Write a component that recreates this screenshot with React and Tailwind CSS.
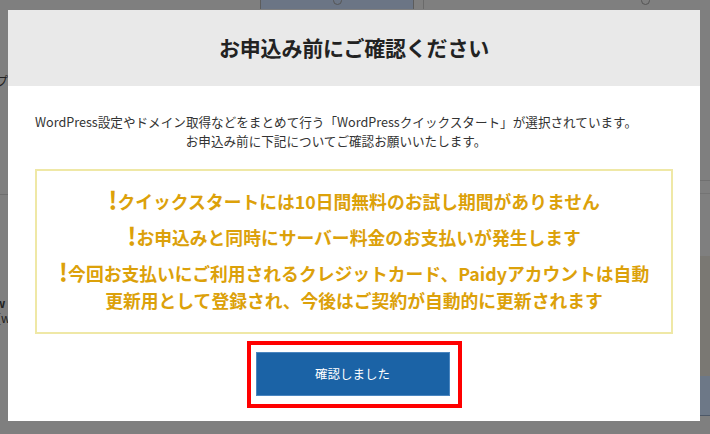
import React from 'react'

const NOTICES = [
  ['クイックスタートには10日間無料のお試し期間がありません'],
  ['お申込みと同時にサーバー料金のお支払いが発生します'],
  ['今回お支払いにご利用されるクレジットカード、Paidyアカウントは自動', '更新用として登録され、今後はご契約が自動的に更新されます']
]

function Backdrop() {
  // dimmed page that sits behind the dialog
  return (
    <div className="flex flex-col h-full">
      <div className="flex h-[9px]">
        <div className="w-[260px]" />
        <div className="w-[154px] bg-[#6b7585] border-x border-[#5c5c5c] flex justify-center">
          <div className="w-[9px] h-[9px] -mt-[4px] rounded-full border border-[#555]" />
        </div>
        <div className="w-[10px] border-r border-[#6a6a6a]" />
        <div className="flex-1 flex justify-end pr-[60px]">
          <div className="w-[9px] h-[9px] -mt-[4px] rounded-full border border-[#555]" />
        </div>
      </div>
      <div className="flex-1 flex justify-between">
        <div className="w-[8px] flex flex-col text-[#222] text-[12px] overflow-hidden">
          <div className="h-[64px]" />
          <div className="leading-[16px] -ml-[4px]">プ</div>
          <div className="h-[106px] border-b border-[#6e6e6e]" />
          <div className="h-[100px]" />
          <div className="leading-[15px] font-bold -ml-[5px]">w</div>
          <div className="leading-[15px] -ml-[3px]">[w</div>
        </div>
        <div className="w-[10px] flex flex-col">
          <div className="h-[172px] border-b border-[#707070]" />
          <div className="h-[13px] border-b border-[#747474]" />
          <div className="h-[62px]" />
          <div className="h-[120px] bg-[#7a7873]" />
          <div className="h-[40px] bg-[#6d7887] border-b border-[#4d5868]" />
        </div>
      </div>
    </div>
  )
}

export default function App() {
  return (
    <div className="relative w-[710px] h-[434px] bg-[#7f7f7f] overflow-hidden font-['Noto_Sans_CJK_JP',sans-serif]">
      <Backdrop />

      {/* dialog */}
      <div className="absolute left-[8px] top-[10px] w-[692px] h-[411px] bg-white flex flex-col">
        <div className="h-[76px] bg-[#e9e9e9] flex items-center justify-center">
          <h2 className="text-[21px] font-bold text-[#222] tracking-[-0.2px]">お申込み前にご確認ください</h2>
        </div>

        <div className="pt-[26px] pl-[27px]">
          <p className="inline-block text-center text-[12.6px] leading-[19px] text-[#333]">
            WordPress設定やドメイン取得などをまとめて行う「WordPressクイックスタート」が選択されています。
            <br />
            お申込み前に下記についてご確認お願いいたします。
          </p>
        </div>

        <div className="mx-[27px] mt-[18px] h-[165px] border-2 border-[#efe8a6] pt-[17px] px-[8px] text-center">
          {NOTICES.map((lines, i) => (
            <p key={i} className="mb-[9px] text-[17.8px] leading-[27px] font-bold text-[#dca10a] whitespace-nowrap">
              <span className="text-[25px] leading-[0] align-[-1px]">!</span>
              {lines[0]}
              {lines[1] && (
                <>
                  <br />
                  {lines[1]}
                </>
              )}
            </p>
          ))}
        </div>

        <div className="mt-[7px] flex justify-center">
          <div className="border-4 border-[#ff0000] pt-[7px] pb-[8px] pl-[5px] pr-[8px]">
            <button className="w-[194px] h-[44px] bg-[#1b63a6] border border-[#4a86c0] text-white text-[12.5px]">
              確認しました
            </button>
          </div>
        </div>
      </div>
    </div>
  )
}
